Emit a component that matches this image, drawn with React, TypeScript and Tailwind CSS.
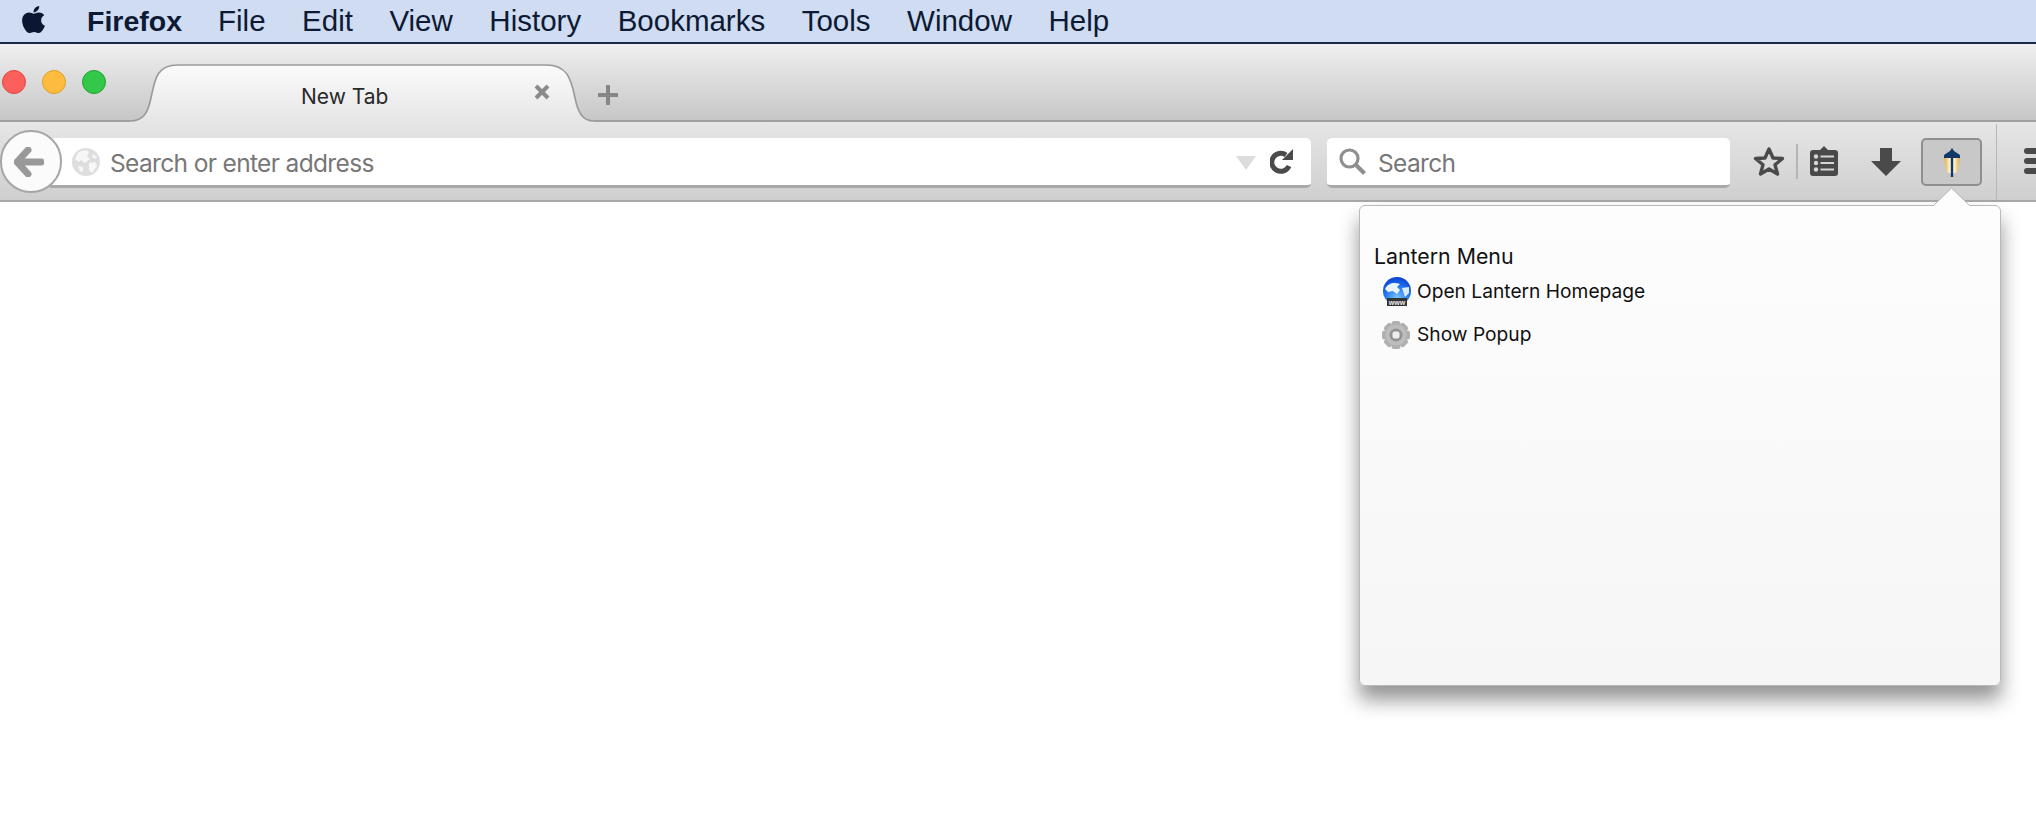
import { FaApple } from 'react-icons/fa';

const menus = ['File', 'Edit', 'View', 'History', 'Bookmarks', 'Tools', 'Window', 'Help'];

function TabShape() {
  return (
    <svg className="absolute inset-0" width="464" height="58" viewBox="0 0 464 58">
      <defs>
        <linearGradient id="tabFill" x1="0" y1="0" x2="0" y2="1">
          <stop offset="0" stopColor="#fbfbfb" />
          <stop offset="1" stopColor="#e6e6e6" />
        </linearGradient>
      </defs>
      <path
        d="M0 57 C14 57 18 48 21 34 C25 14 27 1 48 1 L416 1 C437 1 441 14 445 34 C448 48 452 57 464 57 L464 58 L0 58 Z"
        fill="url(#tabFill)"
      />
      <path
        d="M0 57 C14 57 18 48 21 34 C25 14 27 1 48 1 L416 1 C437 1 441 14 445 34 C448 48 452 57 464 57"
        fill="none"
        stroke="#9a9a9a"
        strokeWidth="1.6"
      />
    </svg>
  );
}

function GrayGlobe() {
  return (
    <svg width="28" height="28" viewBox="0 0 28 28" className="shrink-0">
      <circle cx="14" cy="14" r="14" fill="#dedede" />
      <path d="M6 5 C10 2 15 2 17 4 L15 8 L18 11 L13 15 L9 12 L7 14 L3 11 Z" fill="#f7f7f7" />
      <path d="M17 15 L23 14 L25 18 L20 25 L17 22 Z" fill="#f7f7f7" />
      <path d="M21 6 L25 9 L23 11 L20 9 Z" fill="#f7f7f7" />
      <path d="M6 18 L11 19 L11 24 L8 23 Z" fill="#f7f7f7" />
    </svg>
  );
}

function BlueGlobe() {
  return (
    <svg width="30" height="30" viewBox="0 0 30 30" className="shrink-0">
      <defs>
        <radialGradient id="globeFill" cx="0.5" cy="0.75" r="0.75">
          <stop offset="0" stopColor="#7cc4ff" />
          <stop offset="0.6" stopColor="#1f73ea" />
          <stop offset="1" stopColor="#0a3fd0" />
        </radialGradient>
      </defs>
      <circle cx="15" cy="14" r="14" fill="url(#globeFill)" />
      <path d="M3 12 C6 6 12 5 18 7 L15 10 L18 13 L15 17 L11 14 L6 15 Z" fill="#e9f4ff" />
      <path d="M20 11 L27 10 L27 16 L23 20 Z" fill="#dcecff" />
      <rect x="5" y="21" width="20" height="8" fill="#333" />
      <text x="15" y="27.5" textAnchor="middle" fontSize="7" fontFamily="Liberation Sans, sans-serif" fontWeight="700" fill="#eee">
        www
      </text>
    </svg>
  );
}

function Gear() {
  return (
    <svg width="28" height="30" viewBox="0 0 28 30" className="shrink-0">
      {[0, 45, 90, 135].map((a) => (
        <rect key={a} x="9.5" y="1" width="9" height="28" rx="2.5" fill="#b0b0b0" transform={`rotate(${a} 14 15)`} />
      ))}
      <circle cx="14" cy="15" r="10.5" fill="#bdbdbd" />
      <circle cx="14" cy="15" r="6.5" fill="#939393" />
      <rect x="10.5" y="11.5" width="7" height="7" rx="2" fill="#efefef" />
    </svg>
  );
}

function Lantern() {
  return (
    <svg width="18" height="30" viewBox="0 0 18 30">
      <defs>
        <linearGradient id="lanternGlow" x1="0" y1="0" x2="1" y2="0">
          <stop offset="0" stopColor="#e0a93c" />
          <stop offset="0.38" stopColor="#fdf6d8" />
          <stop offset="0.62" stopColor="#fdf6d8" />
          <stop offset="1" stopColor="#e0a93c" />
        </linearGradient>
      </defs>
      <path d="M1 10 L17 10 L15 23 C13.5 28 4.5 28 3 23 Z" fill="url(#lanternGlow)" />
      <path d="M7 4 L9 1 L11 4 L17 8 L17 11 L1 11 L1 8 Z" fill="#12386a" />
      <rect x="7.8" y="9" width="2.4" height="21" fill="#12386a" />
    </svg>
  );
}

export default function App() {
  return (
    <div className="relative h-[814px] w-[2036px] overflow-hidden bg-white font-['Liberation_Sans',sans-serif]">
      {/* Menu bar */}
      <div className="flex h-[44px] items-center border-b-2 border-[#1a2a4c] bg-[#cfdcf2] pl-[20px] text-[29.5px] text-[#0d1a33]">
        <FaApple className="mb-[4px] h-[31px] w-[27px] shrink-0 text-[#0b1730]" />
        <span className="ml-[40px] text-[28.5px] font-bold">Firefox</span>
        <div className="ml-[36px] flex gap-[36.5px]">
          {menus.map((m) => (
            <span key={m}>{m}</span>
          ))}
        </div>
      </div>

      {/* Tab strip */}
      <div className="flex h-[78px] bg-gradient-to-b from-[#efefef] to-[#c6c6c6]">
        <div className="flex h-full w-[130px] shrink-0 items-start gap-[16px] border-b-2 border-[#a0a0a0] pl-[2px] pt-[26px]">
          <span className="h-[24px] w-[24px] rounded-full border border-[#e2463f] bg-[#fc605c]" />
          <span className="h-[24px] w-[24px] rounded-full border border-[#dfa023] bg-[#fdbc40]" />
          <span className="h-[24px] w-[24px] rounded-full border border-[#1fa32c] bg-[#34c84a]" />
        </div>
        <div className="relative mt-[20px] h-[58px] w-[464px] shrink-0">
          <TabShape />
          <div className="relative flex h-full items-center pt-[7px]">
            <span className="ml-[171px] font-['Inter',sans-serif] text-[21px] text-[#2a2a2a]">New Tab</span>
            <svg width="18" height="18" viewBox="0 0 18 18" className="ml-auto mb-[9px] mr-[43px]">
              <path d="M3 3 L15 15 M15 3 L3 15" stroke="#8a8a8a" strokeWidth="4" />
            </svg>
          </div>
        </div>
        <div className="flex flex-1 items-start border-b-2 border-[#a0a0a0] pl-[4px] pt-[41px]">
          <svg width="20" height="20" viewBox="0 0 20 20">
            <path d="M10 0 V20 M0 10 H20" stroke="#868686" strokeWidth="4" />
          </svg>
        </div>
      </div>

      {/* Navigation bar */}
      <div className="flex h-[80px] items-start border-b-2 border-[#a8a8a8] bg-gradient-to-b from-[#e6e6e6] to-[#cfcfcf] pt-[16px]">
        <div className="relative z-10 -mr-[12px] -mt-[8px] flex h-[63px] w-[62px] shrink-0 items-center justify-center rounded-full border-2 border-[#a6a6a6] bg-[#fbfbfb] pr-[4px]">
          <svg width="30" height="30" viewBox="0 0 30 30">
            <path d="M14 3 L3 15 L14 27 M4 15 H27" fill="none" stroke="#999" strokeWidth="7" strokeLinejoin="round" strokeLinecap="round" />
          </svg>
        </div>
        <div className="flex h-[50px] w-[1261px] shrink-0 items-center rounded-r-[5px] border-b-[3px] border-[#a9a9a9] bg-white pl-[22px]">
          <GrayGlobe />
          <span className="ml-[10px] pt-[4px] font-['Inter',sans-serif] text-[24.5px] tracking-[-0.65px] text-[#777]">Search or enter address</span>
          <svg width="20" height="14" viewBox="0 0 20 14" className="ml-auto mt-[2px]">
            <path d="M0 0 H20 L10 14 Z" fill="#dcdcdc" />
          </svg>
          <svg width="24" height="26" viewBox="0 0 24 26" className="ml-[14px] mr-[17px]">
            <path d="M19 17 A9 9 0 1 1 16 6" fill="none" stroke="#4a4a4a" strokeWidth="5" />
            <path d="M12 11 L23 11 L23 0 Z" fill="#4a4a4a" />
          </svg>
        </div>
        <div className="ml-[16px] flex h-[50px] w-[403px] shrink-0 items-center rounded-[5px] border-b-[3px] border-[#a9a9a9] bg-white pl-[12px]">
          <svg width="27" height="27" viewBox="0 0 27 27">
            <circle cx="10.5" cy="10.5" r="8.5" fill="none" stroke="#8f8f8f" strokeWidth="3.2" />
            <path d="M17 17 L25.5 25.5" stroke="#8f8f8f" strokeWidth="4" />
          </svg>
          <span className="ml-[12px] pt-[4px] font-['Inter',sans-serif] text-[24.5px] tracking-[-0.65px] text-[#777]">Search</span>
        </div>
        <svg width="32" height="31" viewBox="0 0 32 31" className="ml-[23px] mt-[8px] shrink-0">
          <path d="M16 3 L20 12 L29.5 12.5 L22 18.8 L24.5 28 L16 23 L7.5 28 L10 18.8 L2.5 12.5 L12 12 Z" fill="none" stroke="#4a4a4a" strokeWidth="3.4" strokeLinejoin="round" />
        </svg>
        <div className="ml-[11px] mt-[6px] h-[35px] w-[2px] shrink-0 bg-[#b5b5b5]" />
        <svg width="28" height="30" viewBox="0 0 28 30" className="ml-[12px] mt-[8px] shrink-0">
          <path d="M10 4 L14 0 L18 4 H25 A3 3 0 0 1 28 7 V27 A3 3 0 0 1 25 30 H3 A3 3 0 0 1 0 27 V7 A3 3 0 0 1 3 4 Z" fill="#4a4a4a" />
          <circle cx="6" cy="10.5" r="2.2" fill="#d6d6d6" />
          <circle cx="6" cy="17" r="2.2" fill="#d6d6d6" />
          <circle cx="6" cy="23.5" r="2.2" fill="#d6d6d6" />
          <path d="M10.5 10.5 H24 M10.5 17 H24 M10.5 23.5 H24" stroke="#d6d6d6" strokeWidth="2" />
        </svg>
        <svg width="30" height="28" viewBox="0 0 30 28" className="ml-[33px] mt-[10px] shrink-0">
          <path d="M9 0 H21 V13 H30 L15 28 L0 13 H9 Z" fill="#4a4a4a" />
        </svg>
        <div className="ml-[20px] flex h-[48px] w-[61px] shrink-0 items-center justify-center rounded-[5px] border-2 border-[#8f8f8f] bg-[#c8c8c8]">
          <Lantern />
        </div>
        <div className="ml-[14px] -mt-[14px] h-[76px] w-[1px] shrink-0 bg-[#b4b8be]" />
        <div className="ml-[27px] mt-[10px] flex shrink-0 flex-col gap-[4px]">
          <span className="h-[6px] w-[20px] rounded-l-[3px] bg-[#4a4a4a]" />
          <span className="h-[6px] w-[20px] rounded-l-[3px] bg-[#4a4a4a]" />
          <span className="h-[6px] w-[20px] rounded-l-[3px] bg-[#4a4a4a]" />
        </div>
      </div>

      {/* Lantern panel */}
      <div className="absolute left-[1359px] top-[205px] h-[481px] w-[642px] rounded-[6px] border border-[#b9b9b9] bg-gradient-to-b from-[#fdfdfd] to-[#f6f6f6] pl-[14px] pt-[31px] font-['Inter',sans-serif] text-[#111] shadow-[0_14px_20px_rgba(0,0,0,0.42)]">
        <div className="text-[21.3px] leading-[38px]">Lantern Menu</div>
        <div className="flex h-[33px] items-center pl-[8px]">
          <BlueGlobe />
          <span className="ml-[5px] text-[19.2px]">Open Lantern Homepage</span>
        </div>
        <div className="mt-[10px] flex h-[33px] items-center pl-[8px]">
          <Gear />
          <span className="ml-[7px] text-[19.2px]">Show Popup</span>
        </div>
      </div>
      {/* Panel arrow */}
      <svg width="37" height="19" viewBox="0 0 37 19" className="absolute left-[1933px] top-[187px]">
        <path d="M0 19 L18.5 1 L37 19 Z" fill="#fdfdfd" />
        <path d="M0 19 L18.5 1 L37 19" fill="none" stroke="#b4b4b4" strokeWidth="1" />
      </svg>
    </div>
  );
}
